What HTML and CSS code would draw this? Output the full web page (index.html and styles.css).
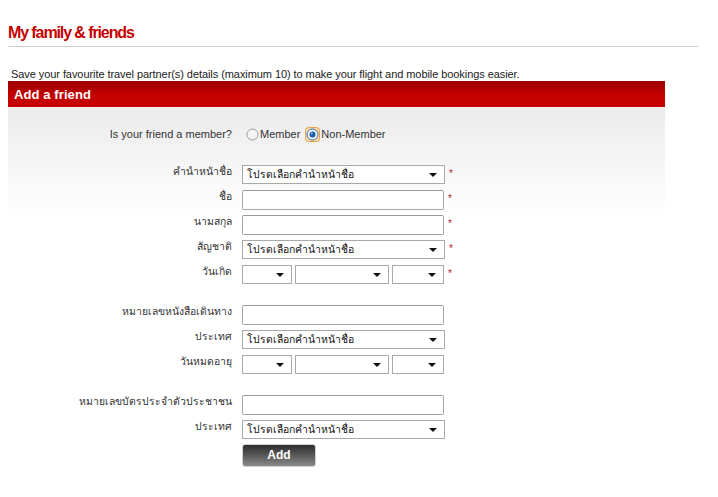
FILE: index.html
```html
<!DOCTYPE html>
<html>
<head>
<meta charset="utf-8">
<link rel="stylesheet" href="styles.css">
</head>
<body>
<div class="page">
  <h1 class="title">My family &amp; friends</h1>
  <div class="rule"></div>
  <p class="intro">Save your favourite travel partner(s) details (maximum 10) to make your flight and mobile bookings easier.</p>
  <div class="box">
    <div class="box-head">Add a friend</div>
    <div class="box-body">
      <div class="member-row">
        <span class="label">Is your friend a member?</span>
        <span class="radios">
          <span class="radio">
            <svg width="13" height="13" viewBox="0 0 13 13"><circle cx="6.5" cy="6.5" r="5.5" fill="#f4f4f4" stroke="#9a9a9a"/></svg>
            Member
          </span>
          <span class="radio">
            <svg width="15" height="15" viewBox="0 0 15 15"><rect x="0.5" y="0.5" width="14" height="14" rx="3" fill="#f8d9a8" stroke="#e6a447"/><circle cx="7.5" cy="7.5" r="5.5" fill="#f6f6f6" stroke="#2f6db5"/><circle cx="7.5" cy="7.5" r="3" fill="#1c5ba6"/><circle cx="6.7" cy="6.6" r="1" fill="#8fb8e6"/></svg>
            Non-Member
          </span>
        </span>
      </div>

      <div class="group">
        <div class="row"><span class="label">คำนำหน้าชื่อ</span><div class="sel w-full"><span>โปรดเลือกคำนำหน้าชื่อ</span><i class="caret"></i></div><span class="req">*</span></div>
        <div class="row"><span class="label">ชื่อ</span><div class="inp"></div><span class="req">*</span></div>
        <div class="row"><span class="label">นามสกุล</span><div class="inp"></div><span class="req">*</span></div>
        <div class="row"><span class="label">สัญชาติ</span><div class="sel w-full"><span>โปรดเลือกคำนำหน้าชื่อ</span><i class="caret"></i></div><span class="req">*</span></div>
        <div class="row"><span class="label">วันเกิด</span><div class="dates"><div class="sel w-d"><i class="caret"></i></div><div class="sel w-m"><i class="caret"></i></div><div class="sel w-y"><i class="caret"></i></div></div><span class="req">*</span></div>
      </div>

      <div class="group">
        <div class="row"><span class="label">หมายเลขหนังสือเดินทาง</span><div class="inp"></div></div>
        <div class="row"><span class="label">ประเทศ</span><div class="sel w-full"><span>โปรดเลือกคำนำหน้าชื่อ</span><i class="caret"></i></div></div>
        <div class="row"><span class="label">วันหมดอายุ</span><div class="dates"><div class="sel w-d"><i class="caret"></i></div><div class="sel w-m"><i class="caret"></i></div><div class="sel w-y"><i class="caret"></i></div></div></div>
      </div>

      <div class="group">
        <div class="row"><span class="label">หมายเลขบัตรประจำตัวประชาชน</span><div class="inp"></div></div>
        <div class="row"><span class="label">ประเทศ</span><div class="sel w-full"><span>โปรดเลือกคำนำหน้าชื่อ</span><i class="caret"></i></div></div>
        <div class="row btn-row"><span class="label"></span><button class="add">Add</button></div>
      </div>
    </div>
  </div>
</div>
</body>
</html>
```

FILE: styles.css
```css
html, body {
  margin: 0;
  padding: 0;
  background: #fff;
}
body {
  font-family: Tahoma, "Liberation Sans", "DejaVu Sans", sans-serif;
  font-size: 11px;
  color: #222;
}
.page {
  padding: 23px 0 0 8px;
  width: 690px;
}
.title {
  margin: 0;
  font-family: "Liberation Sans", Arial, sans-serif;
  font-size: 16px;
  font-weight: bold;
  letter-spacing: -1.1px;
  color: #c40000;
  line-height: 20px;
  height: 20px;
}
.rule {
  margin-top: 3px;
  height: 1px;
  background: #cfcfcf;
}
.intro {
  margin: 21px 0 0 3px;
  font-family: "Liberation Sans", Arial, sans-serif;
  font-size: 11px;
  letter-spacing: -0.07px;
  line-height: 13px;
  color: #222;
}
.box {
  width: 657px;
}
.box-head {
  height: 26px;
  line-height: 27px;
  padding-left: 6px;
  background: linear-gradient(#9c0000, #c40000 55%, #c60000);
  color: #fff;
  font-family: "Liberation Sans", Arial, sans-serif;
  font-weight: bold;
  font-size: 13px;
  letter-spacing: 0.1px;
}
.box-body {
  background: linear-gradient(#ebebeb, #ffffff 110px);
  padding-top: 19px;
  padding-bottom: 20px;
}
.label {
  width: 224px;
  flex: none;
  text-align: right;
  margin-right: 10px;
}
.member-row {
  display: flex;
  align-items: center;
  height: 16px;
  font-family: "Liberation Sans", Arial, sans-serif;
  font-size: 11px;
  color: #333;
}
.member-row .label {
  margin-right: 14px;
}
.radios {
  display: flex;
  gap: 5px;
}
.radio {
  display: inline-flex;
  align-items: center;
  gap: 1px;
}
.radio svg {
  display: block;
}
.group {
  margin-top: 20px;
}
.group + .group {
  margin-top: 15px;
}
.row {
  display: flex;
  align-items: center;
  height: 25px;
}
.row .label {
  color: #333;
  font-size: 10.4px;
  margin-top: -6px;
}
.sel {
  position: relative;
  box-sizing: border-box;
  height: 19px;
  border: 1px solid #a9a9a9;
  background: #fff;
  display: flex;
  align-items: center;
  padding-left: 4px;
  color: #111;
  font-size: 10.4px;
}
.w-full { width: 203px; }
.w-d { width: 50px; }
.w-m { width: 94px; }
.w-y { width: 52px; }
.caret {
  position: absolute;
  right: 7px;
  top: 7px;
  width: 0;
  height: 0;
  border-left: 4px solid transparent;
  border-right: 4px solid transparent;
  border-top: 4px solid #111;
}
.dates {
  display: flex;
  gap: 3px;
}
.inp {
  box-sizing: border-box;
  width: 202px;
  height: 20px;
  border: 1px solid #a6a6a6;
  border-top-color: #9a9a9a;
  border-radius: 2px;
  background: #fff;
}
.req {
  color: #b4262a;
  font-size: 10px;
  margin-left: 4px;
  align-self: center;
  margin-top: -2px;
}
.btn-row {
  height: 24px;
  margin-top: 1px;
}
.btn-row .label {
  margin-top: 0;
}
.add {
  width: 74px;
  height: 23px;
  border: 1px solid #cfcfcf;
  border-radius: 3px;
  background: linear-gradient(#2e2e2e, #555 45%, #8a8a8a);
  color: #fff;
  font-family: "Liberation Sans", Arial, sans-serif;
  font-weight: bold;
  font-size: 12px;
  padding: 0;
}
```
